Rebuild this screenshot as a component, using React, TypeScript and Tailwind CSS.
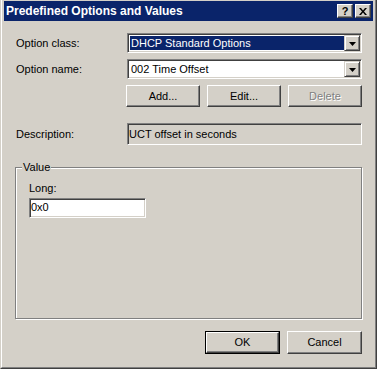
const raised =
  "border border-t-white border-l-white border-r-[#404040] border-b-[#404040] shadow-[inset_-1px_-1px_#808080]";
const sunken =
  "border border-t-[#808080] border-l-[#808080] border-r-white border-b-white shadow-[inset_1px_1px_#404040,inset_-1px_-1px_#d4d0c8] p-[1px]";

const DropArrow = () => (
  <div className="flex h-full w-[16px] items-center justify-center border border-t-[#d4d0c8] border-l-[#d4d0c8] border-r-[#404040] border-b-[#404040] bg-[#d4d0c8] shadow-[inset_1px_1px_white,inset_-1px_-1px_#808080]">
    <svg width="7" height="4" viewBox="0 0 7 4" className="mt-[1px]">
      <path d="M0 0h7L3.5 4z" fill="black" />
    </svg>
  </div>
);

const Combo = ({ value, selected }: { value: string; selected?: boolean }) => (
  <div className={`flex h-[20px] flex-1 bg-white ${sunken}`}>
    <div className="flex flex-1 items-center pl-[1px]">
      <span
        className={`px-[1px] leading-[14px] w-full ${
          selected ? "bg-[#0a246a] text-white" : "text-black"
        }`}
      >
        {value}
      </span>
    </div>
    <DropArrow />
  </div>
);

const Button = ({
  label,
  disabled,
  isDefault,
}: {
  label: string;
  disabled?: boolean;
  isDefault?: boolean;
}) =>
  isDefault ? (
    <div className="h-[23px] w-[75px] border border-black">
      <button
        type="button"
        className={`h-full w-full bg-[#d4d0c8] text-black ${raised}`}
      >
        {label}
      </button>
    </div>
  ) : (
    <button
      type="button"
      className={`w-[75px] bg-[#d4d0c8] ${raised} ${
        disabled ? "text-[#808080] [text-shadow:1px_1px_white]" : "text-black"
      }`}
    >
      {label}
    </button>
  );

const TitleButton = ({ children }: { children: React.ReactNode }) => (
  <div
    className={`flex h-[14px] w-[16px] items-center justify-center bg-[#d4d0c8] ${raised}`}
  >
    {children}
  </div>
);

const App = () => {
  return (
    <div className="h-[369px] w-[377px] overflow-hidden bg-white font-['Liberation_Sans',Arial,sans-serif] text-[11px] text-black">
      <div className="h-[369px] w-[377px] border border-t-0 border-l-[#d4d0c8] border-r-[#404040] border-b-[#404040]">
        <div className="flex h-full flex-col border border-t-0 border-l-white border-r-[#808080] border-b-[#808080] bg-[#d4d0c8] px-[2px] pt-[1px]">
          {/* title bar */}
          <div className="flex h-[20px] items-center justify-between bg-[#0a246a] pl-[2px] pr-[2px]">
            <span className="text-[12px] font-bold text-white">
              Predefined Options and Values
            </span>
            <div className="flex gap-[2px]">
              <TitleButton>
                <span className="text-[11px] font-bold leading-none">?</span>
              </TitleButton>
              <TitleButton>
                <svg width="8" height="7" viewBox="0 0 8 7">
                  <path
                    d="M0 0h2l2 2.5L6 0h2L5 3.5 8 7H6L4 4.5 2 7H0l3-3.5z"
                    fill="black"
                  />
                </svg>
              </TitleButton>
            </div>
          </div>

          {/* body */}
          <div className="flex flex-1 flex-col pl-[12px] pr-[11px]">
            <div className="mt-[12px] flex items-center">
              <span className="w-[111px]">Option class:</span>
              <Combo value="DHCP Standard Options" selected />
            </div>
            <div className="mt-[6px] flex items-center">
              <span className="w-[111px]">Option name:</span>
              <Combo value="002 Time Offset" />
            </div>
            <div className="ml-[110px] mt-[6px] flex h-[22px] gap-[7px]">
              <Button label="Add..." />
              <Button label="Edit..." />
              <Button label="Delete" disabled />
            </div>

            <div className="mt-[16px] flex items-center">
              <span className="w-[111px]">Description:</span>
              <div
                className={`flex h-[22px] flex-1 items-start bg-[#d4d0c8] pl-[1px] pt-[2px] ${sunken}`}
              >
                UCT offset in seconds
              </div>
            </div>

            <fieldset className="ml-[-1px] mt-[16px] h-[158px] border border-[#808080] px-[13px] shadow-[inset_1px_1px_white,1px_1px_white]">
              <legend className="ml-[-7px] bg-[#d4d0c8] px-[1px] leading-[13px]">
                Value
              </legend>
              <div className="mt-[6px]">Long:</div>
              <div
                className={`mt-[1px] flex h-[20px] w-[117px] items-center bg-white pl-[1px] ${sunken}`}
              >
                0x0
              </div>
            </fieldset>

            <div className="mt-[12px] flex justify-end gap-[7px]">
              <Button label="OK" isDefault />
              <div className="flex h-[23px]">
                <Button label="Cancel" />
              </div>
            </div>
          </div>
        </div>
      </div>
    </div>
  );
};

export default App;
